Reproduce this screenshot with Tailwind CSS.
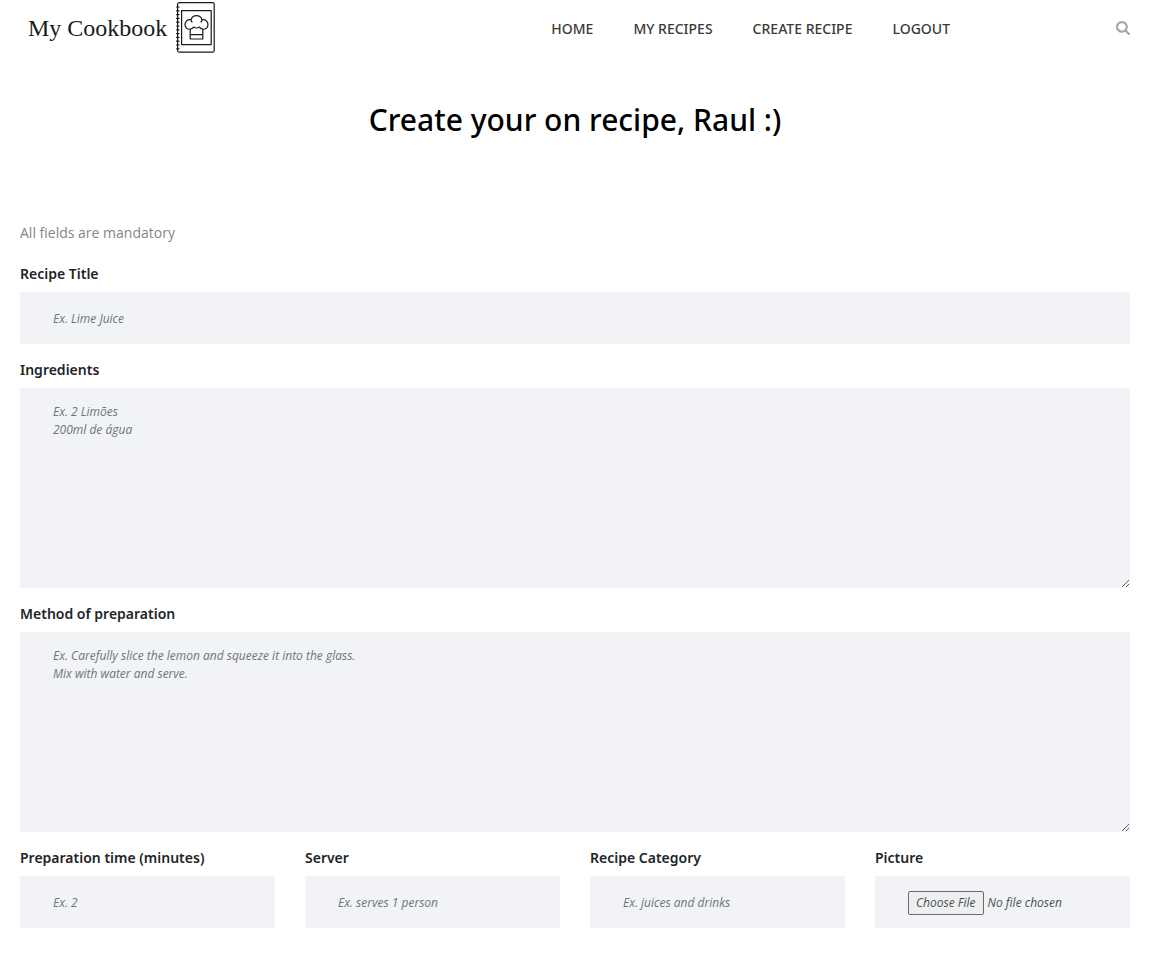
<!DOCTYPE html>
<html lang="en">
<head>
<meta charset="utf-8">
<meta name="viewport" content="width=device-width, initial-scale=1">
<title>My Cookbook</title>
<script src="https://cdn.jsdelivr.net/npm/@tailwindcss/browser@4"></script>
</head>
<body class="bg-white pr-[30px] pl-5 font-['Open_Sans',sans-serif] text-sm text-[#212529]">
<header class="flex h-14 items-center">
  <a href="#" class="flex items-center gap-2 pl-2 text-[#1a1a1a]">
    <span class="font-['Liberation_Serif',serif] text-2xl">My Cookbook</span>
    <svg class="h-[52px] w-10" viewBox="0 0 40 52" fill="none" stroke="currentColor" stroke-width="1.2" stroke-linecap="round" stroke-linejoin="round" aria-hidden="true">
      <rect x="2.6" y="0.600" width="36.6" height="49.6" rx="1.8"/>
      <rect x="6.6" y="8.600" width="29.6" height="34"/>
      <path d="M1.600 5h2.400M1.600 8.800h2.400M1.600 12.600h2.400M1.600 16.400h2.400M1.600 20.200h2.400M1.600 24h2.400M1.600 27.800h2.400M1.600 31.600h2.400M1.600 35.400h2.400M1.600 39.200h2.400M1.600 43h2.400M1.600 46.800h2.400"/>
      <path d="M15.200 37V27.200c-3 .3-5.200-1.700-5.200-4.600 0-3.300 2.800-5.500 6-4.800.7-2.600 2.800-4.200 5.500-4.200s4.800 1.600 5.500 4.200c3.200-.7 6 1.500 6 4.800 0 2.900-2.200 4.900-5.200 4.600v9.800zM15.200 32.600h12.600M15.200 27.200c1.700-.2 2.700-.9 3.300-2.200M27.800 27.200c-1.700-.2-2.700-.9-3.300-2.200M18.500 25c1.800 1.200 4.200 1.200 6 0M16 17.800c.1 1 .5 1.700 1 2.200M27 17.800c-.1 1-.5 1.700-1 2.200"/>
    </svg>
  </a>
  <nav class="mr-[166px] ml-auto flex gap-10 pt-0.5 font-['Noto_Sans',sans-serif] font-medium text-[#3a3a3a]">
    <a href="#">HOME</a>
    <a href="#">MY RECIPES</a>
    <a href="#">CREATE RECIPE</a>
    <a href="#">LOGOUT</a>
  </nav>
  <button type="button" aria-label="Search" class="text-[#a6a6a6]">
    <svg class="size-[14px]" viewBox="0 0 1664 1664" fill="currentColor" aria-hidden="true"><path d="M1152 704q0-185-131.500-316.500T704 256 387.500 387.500 256 704t131.500 316.500T704 1152t316.500-131.500T1152 704zm512 832q0 52-38 90t-90 38q-54 0-90-38l-343-342q-179 124-399 124-143 0-273.500-55.500t-225-150-150-225T0 704t55.500-273.500 150-225 225-150T704 0t273.500 55.500 225 150 150 225T1408 704q0 220-124 399l343 343q37 37 37 90z"/></svg>
  </button>
</header>
<main>
  <h1 class="pt-11 text-center font-['Noto_Sans',sans-serif] text-[30px] leading-10 font-medium text-black">Create your on recipe, Raul :)</h1>
  <form class="pt-[81px]">
    <p class="leading-6 text-[#858585]">All fields are mandatory</p>
    <div class="mt-[19px] grid grid-cols-4 gap-x-[30px] gap-y-4">
      <div class="col-span-4 flex flex-col gap-2">
        <label for="title" class="font-['Noto_Sans',sans-serif] font-semibold">Recipe Title</label>
        <input id="title" type="text" placeholder="Ex. Lime Juice" class="h-[52px] w-full bg-[#f1f3f7] px-[33px] text-xs italic placeholder:text-[#6c757d]">
      </div>
      <div class="col-span-4 flex flex-col gap-2">
        <label for="ingredients" class="font-['Noto_Sans',sans-serif] font-semibold">Ingredients</label>
        <textarea id="ingredients" placeholder="Ex. 2 Limões&#10;200ml de água" class="h-[200px] w-full bg-[#f1f3f7] px-[33px] py-[15px] text-xs leading-[18px] italic placeholder:text-[#6c757d]"></textarea>
      </div>
      <div class="col-span-4 flex flex-col gap-2">
        <label for="method" class="font-['Noto_Sans',sans-serif] font-semibold">Method of preparation</label>
        <textarea id="method" placeholder="Ex. Carefully slice the lemon and squeeze it into the glass.&#10;Mix with water and serve." class="h-[200px] w-full bg-[#f1f3f7] px-[33px] py-[15px] text-xs leading-[18px] italic placeholder:text-[#6c757d]"></textarea>
      </div>
      <div class="flex flex-col gap-2">
        <label for="time" class="font-['Noto_Sans',sans-serif] font-semibold">Preparation time (minutes)</label>
        <input id="time" type="text" placeholder="Ex. 2" class="h-[52px] w-full bg-[#f1f3f7] px-[33px] text-xs italic placeholder:text-[#6c757d]">
      </div>
      <div class="flex flex-col gap-2">
        <label for="serves" class="font-['Noto_Sans',sans-serif] font-semibold">Server</label>
        <input id="serves" type="text" placeholder="Ex. serves 1 person" class="h-[52px] w-full bg-[#f1f3f7] px-[33px] text-xs italic placeholder:text-[#6c757d]">
      </div>
      <div class="flex flex-col gap-2">
        <label for="category" class="font-['Noto_Sans',sans-serif] font-semibold">Recipe Category</label>
        <input id="category" type="text" placeholder="Ex. juices and drinks" class="h-[52px] w-full bg-[#f1f3f7] px-[33px] text-xs italic placeholder:text-[#6c757d]">
      </div>
      <div class="flex flex-col gap-2">
        <label for="picture" class="font-['Noto_Sans',sans-serif] font-semibold">Picture</label>
        <input id="picture" type="file" class="h-[52px] w-full bg-[#f1f3f7] px-[33px] py-[15px] text-xs text-[#495057] italic file:h-6 file:rounded-[2px] file:border file:border-solid file:border-[#6b6b6b] file:bg-[#efefef] file:px-[7px] file:text-[#495057]">
      </div>
    </div>
  </form>
</main>
</body>
</html>
